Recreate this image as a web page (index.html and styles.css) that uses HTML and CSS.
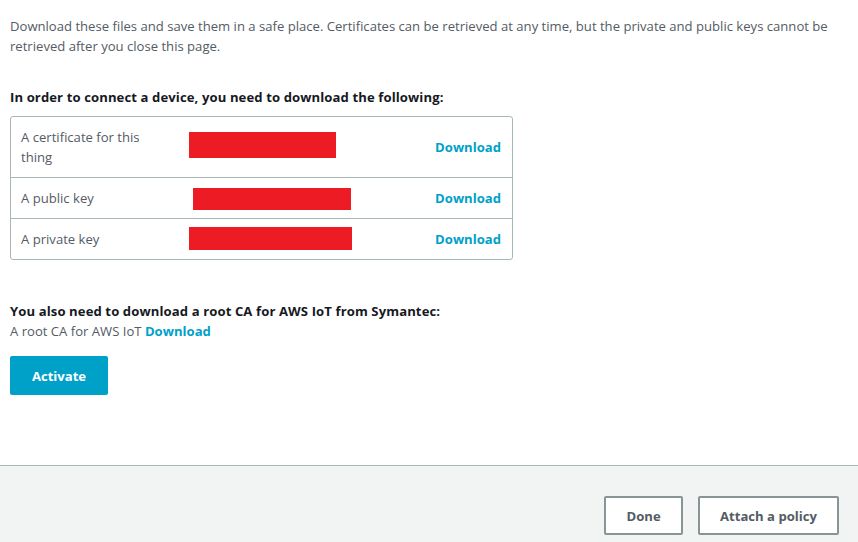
FILE: index.html
```html
<!DOCTYPE html>
<html>
<head>
<meta charset="utf-8">
<link rel="stylesheet" href="styles.css">
</head>
<body>
<main class="content">
  <p class="intro">Download these files and save them in a safe place. Certificates can be retrieved at any time, but the private and public keys cannot be retrieved after you close this page.</p>
  <h2 class="heading">In order to connect a device, you need to download the following:</h2>
  <div class="files">
    <div class="row row-tall">
      <div class="label">A certificate for this<br>thing</div>
      <div class="value"><span class="redact redact-cert"></span></div>
      <a class="link" href="#">Download</a>
    </div>
    <div class="row">
      <div class="label">A public key</div>
      <div class="value"><span class="redact redact-pub"></span></div>
      <a class="link" href="#">Download</a>
    </div>
    <div class="row">
      <div class="label">A private key</div>
      <div class="value"><span class="redact redact-priv"></span></div>
      <a class="link" href="#">Download</a>
    </div>
  </div>
  <h2 class="heading heading-root">You also need to download a root CA for AWS IoT from Symantec:</h2>
  <p class="root">A root CA for AWS IoT <a class="link" href="#">Download</a></p>
  <button class="btn-primary">Activate</button>
</main>
<footer class="footer">
  <button class="btn-secondary btn-done">Done</button>
  <button class="btn-secondary">Attach a policy</button>
</footer>
</body>
</html>
```

FILE: styles.css
```css
html, body {
  margin: 0;
  padding: 0;
  background: #ffffff;
}
body {
  font-family: "Open Sans", "Liberation Sans", sans-serif;
  font-size: 13.1px;
  line-height: 20px;
  color: #545b64;
  width: 858px;
  height: 542px;
  overflow: hidden;
  display: flex;
  flex-direction: column;
}
.content {
  flex: none;
  padding: 16px 10px 0 10px;
  height: 465px;
  box-sizing: border-box;
}
.intro {
  margin: 0;
}
.heading {
  margin: 31px 0 9px 0;
  font-size: 13.1px;
  line-height: 20px;
  font-weight: 700;
  letter-spacing: 0.1px;
  color: #16191f;
}
.heading-root {
  margin: 41px 0 0 0;
}
.files {
  width: 503px;
  box-sizing: border-box;
  border: 1px solid #aab7b8;
  border-radius: 3px;
}
.row {
  display: grid;
  grid-template-columns: 168px 1fr auto;
  align-items: center;
  padding: 10px 11px 10px 10px;
  border-top: 1px solid #aab7b8;
}
.row:first-child {
  border-top: none;
}
.value {
  display: flex;
  align-items: center;
  height: 20px;
}
.redact {
  display: block;
  flex: none;
  background: #ed1c24;
}
.redact-cert { width: 147px; height: 26px; margin-top: -4px; }
.redact-pub { width: 158px; height: 22px; margin-left: 4px; margin-top: 2px; }
.redact-priv { width: 163px; height: 23px; margin-top: -1px; }
.link {
  color: #00a1c9;
  font-weight: 700;
  text-decoration: none;
}
.root {
  margin: 0;
}
.btn-primary {
  display: block;
  margin-top: 15px;
  width: 98px;
  height: 39px;
  border: none;
  border-radius: 2px;
  background: #00a1c9;
  color: #ffffff;
  font-family: inherit;
  font-size: 13.1px;
  font-weight: 700;
}
.footer {
  flex: 1;
  border-top: 1px solid #aab7b8;
  background: #f2f3f3;
  display: flex;
  justify-content: flex-end;
  align-items: flex-start;
  gap: 15px;
  padding: 30px 19px 0 0;
}
.btn-secondary {
  height: 39px;
  padding: 0 20px;
  border: 2px solid #879596;
  border-radius: 2px;
  background: #ffffff;
  color: #545b64;
  font-family: inherit;
  font-size: 13.1px;
  font-weight: 700;
}
.btn-done {
  width: 79px;
}
```
